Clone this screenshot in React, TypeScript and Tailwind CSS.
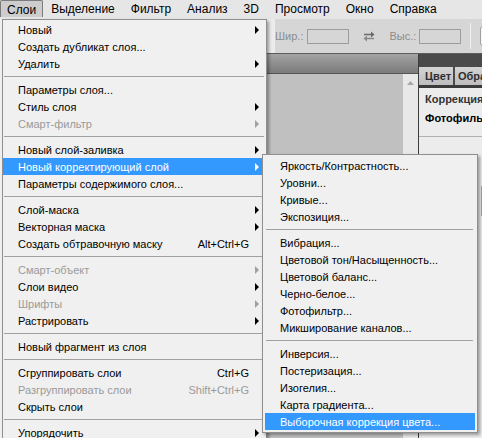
import React from "react";

type Entry =
  | { label: string; shortcut?: string; sub?: boolean; disabled?: boolean; active?: boolean }
  | "sep";

const layerMenu: Entry[] = [
  { label: "Новый", sub: true },
  { label: "Создать дубликат слоя..." },
  { label: "Удалить", sub: true },
  "sep",
  { label: "Параметры слоя..." },
  { label: "Стиль слоя", sub: true },
  { label: "Смарт-фильтр", sub: true, disabled: true },
  "sep",
  { label: "Новый слой-заливка", sub: true },
  { label: "Новый корректирующий слой", sub: true, active: true },
  { label: "Параметры содержимого слоя..." },
  "sep",
  { label: "Слой-маска", sub: true },
  { label: "Векторная маска", sub: true },
  { label: "Создать обтравочную маску", shortcut: "Alt+Ctrl+G" },
  "sep",
  { label: "Смарт-объект", sub: true, disabled: true },
  { label: "Слои видео", sub: true },
  { label: "Шрифты", sub: true, disabled: true },
  { label: "Растрировать", sub: true },
  "sep",
  { label: "Новый фрагмент из слоя" },
  "sep",
  { label: "Сгруппировать слои", shortcut: "Ctrl+G" },
  { label: "Разгруппировать слои", shortcut: "Shift+Ctrl+G", disabled: true },
  { label: "Скрыть слои" },
  "sep",
  { label: "Упорядочить", sub: true },
];

const adjustMenu: Entry[] = [
  { label: "Яркость/Контрастность..." },
  { label: "Уровни..." },
  { label: "Кривые..." },
  { label: "Экспозиция..." },
  "sep",
  { label: "Вибрация..." },
  { label: "Цветовой тон/Насыщенность..." },
  { label: "Цветовой баланс..." },
  { label: "Черно-белое..." },
  { label: "Фотофильтр..." },
  { label: "Микширование каналов..." },
  "sep",
  { label: "Инверсия..." },
  { label: "Постеризация..." },
  { label: "Изогелия..." },
  { label: "Карта градиента..." },
  { label: "Выборочная коррекция цвета...", active: true },
];

const topMenu = ["Выделение", "Фильтр", "Анализ", "3D", "Просмотр", "Окно", "Справка"];

function Arrow({ color }: { color: string }) {
  return (
    <svg width="4" height="8" viewBox="0 0 4 8" className="absolute right-[7px] top-[5px]">
      <polygon points="0,0 4,4 0,8" fill={color} />
    </svg>
  );
}

function MenuList({ items, sepClass }: { items: Entry[]; sepClass: string }) {
  return (
    <>
      {items.map((it, i) =>
        it === "sep" ? (
          <div key={i} className="h-[9px] flex items-center">
            <div className={`h-px flex-1 bg-[#a0a0a0] ${sepClass}`} />
          </div>
        ) : (
          <div
            key={i}
            className={`relative h-[17px] pl-[15px] pt-[1px] leading-[16px] whitespace-nowrap ${
              it.active ? "bg-[#3399ff] text-white" : it.disabled ? "text-[#9a9a9a]" : "text-black"
            }`}
          >
            {it.label}
            {it.shortcut && <span className="absolute right-[17px] top-[1px]">{it.shortcut}</span>}
            {it.sub && <Arrow color={it.active ? "#ffffff" : it.disabled ? "#a0a0a0" : "#000000"} />}
          </div>
        )
      )}
    </>
  );
}

function SwapIcon() {
  return (
    <svg width="12" height="11" viewBox="0 0 12 11">
      <path d="M1 3.5h8" stroke="#6a6a6a" strokeWidth="1.5" />
      <polygon points="8,0.5 11.5,3.5 8,6.5" fill="#6a6a6a" />
      <path d="M3 7.5h8" stroke="#8a8a8a" strokeWidth="1.5" />
      <polygon points="4,4.5 0.5,7.5 4,10.5" fill="#8a8a8a" />
    </svg>
  );
}

export default function App() {
  return (
    <div className="relative w-[482px] h-[438px] overflow-hidden bg-[#d6d6d6] font-['Liberation_Sans',Arial,sans-serif] text-[11px]">
      {/* menu bar */}
      <div className="h-[19px] flex items-start bg-[#e6e6e6] text-[12px] text-black">
        <div className="h-[17px] px-[6px] pt-[2px] leading-[14px] bg-[#cdcdcd] border border-b-0 border-[#7c7c7c] rounded-t-[2px]">
          Слои
        </div>
        {topMenu.map((m) => (
          <div key={m} className="px-[8px] pt-[2px] leading-[14px] first:ml-[1px]">
            {m}
          </div>
        ))}
      </div>

      {/* options bar */}
      <div className="h-[35px] flex items-center border-b border-[#5c5c5c] bg-[#d6d6d6] text-[#8c8c8c] overflow-hidden">
        <div className="w-[275px] shrink-0 self-stretch bg-[#ececec]" />
        <span className="shrink-0">Шир.:</span>
        <div className="ml-[4px] shrink-0 w-[42px] h-[15px] border border-[#9c9c9c]" />
        <div className="ml-[14px] shrink-0 flex">
          <SwapIcon />
        </div>
        <span className="ml-[14px] shrink-0">Выс.:</span>
        <div className="ml-[3px] shrink-0 w-[42px] h-[15px] border border-[#9c9c9c]" />
        <div className="ml-[9px] shrink-0 w-px h-[26px] bg-[#9a9a9a] border-r border-[#f0f0f0]" />
        <div className="ml-[9px] shrink-0 w-[20px] h-[20px] rounded-[3px] border border-[#a0a0a0] bg-[#f6f6f6]" />
      </div>

      {/* workspace */}
      <div className="flex h-[384px]">
        <div className="w-[266px] shrink-0 bg-[#ececec]" />
        <div className="flex-1 flex flex-col">
          <div className="h-[20px] border-b border-[#555] bg-gradient-to-b from-[#a3a3a3] to-[#7b7b7b]" />
          <div className="flex-1 flex bg-[#c0c0c0]">
            <div className="flex-1" />
            <div className="w-[15px] bg-[#e8e8e8] flex justify-center pt-[7px]">
              <svg width="7" height="4" viewBox="0 0 7 4">
                <polygon points="0,4 3.5,0 7,4" fill="#a8a8a8" />
              </svg>
            </div>
          </div>
        </div>
        <div className="w-[64px] shrink-0 flex flex-col border-l border-[#3c3c3c] bg-[#ececec] overflow-hidden">
          <div className="h-[13px] bg-[#4a4a4a]" />
          <div className="h-[18px] flex gap-[2px] bg-[#4a4a4a] font-bold text-[#2e2e2e]">
            <div className="w-[34px] shrink-0 pl-[6px] leading-[18px] bg-gradient-to-b from-[#d4d4d4] to-[#bdbdbd]">Цвет</div>
            <div className="flex-1 pl-[3px] leading-[18px] bg-gradient-to-b from-[#d4d4d4] to-[#bdbdbd]">Обра</div>
          </div>
          <div className="h-[3px] bg-[#3a3a3a]" />
          <div className="pl-[6px] pt-[2px] font-bold text-[#333] leading-[19px] whitespace-nowrap">Коррекция</div>
          <div className="pl-[6px] font-bold text-black leading-[19px] whitespace-nowrap">Фотофильтр</div>
          <div className="mt-[8px] h-px bg-[#b0b0b0]" />
          <div className="mt-[49px] ml-[62px] h-[30px] w-[2px] bg-[#e39a3a]" />
        </div>
      </div>

      {/* Layer menu */}
      <div className="absolute left-[2px] top-[19px] w-[265px] pt-[1px] bg-[#f0f0f0] border border-[#8f8f8f] shadow-[-2px_0_0_#efefef,2px_2px_3px_rgba(0,0,0,0.35)]">
        <MenuList items={layerMenu} sepClass="ml-[1px] mr-[2px]" />
      </div>

      {/* Adjustment layer submenu */}
      <div className="absolute left-[262px] top-[154px] w-[216px] p-[2px] bg-[#f0f0f0] border border-[#8f8f8f] shadow-[2px_2px_3px_rgba(0,0,0,0.35)]">
        <MenuList items={adjustMenu} sepClass="ml-[1px] mr-[2px]" />
      </div>
    </div>
  );
}
